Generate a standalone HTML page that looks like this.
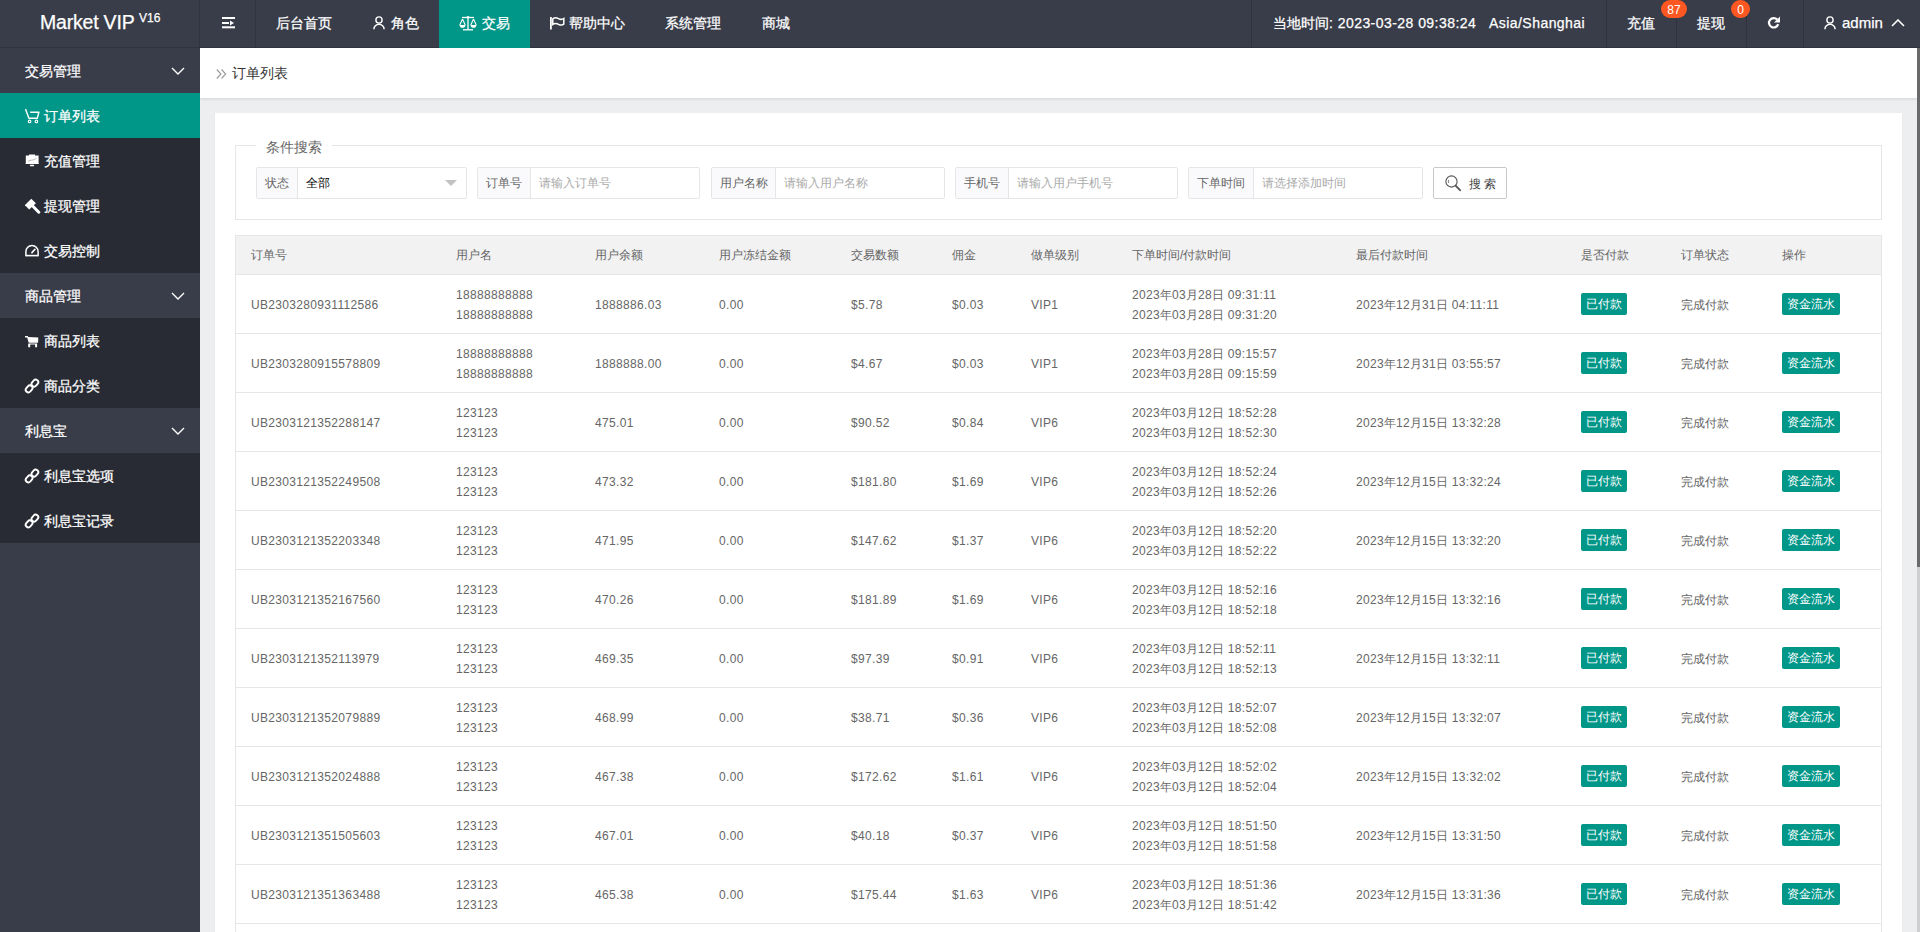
<!DOCTYPE html>
<html><head><meta charset="utf-8"><title>订单列表</title>
<style>
*{box-sizing:border-box}
html,body{margin:0;padding:0;width:1920px;height:932px;overflow:hidden;background:#F2F2F2}
body{font-family:"Liberation Sans",sans-serif;position:relative}
.ab{position:absolute;white-space:nowrap;line-height:1}
.ab>svg{display:block}
.hd{position:absolute;left:0;top:0;width:1920px;height:48px;background:#393D49;border-bottom:1px solid #30333d}
.vdiv{position:absolute;top:0;width:1px;height:47px;background:#30333d}
.nt{color:#fff;font-size:14px}
.hd2 .ab{-webkit-text-stroke:0.25px #fff}
.side{position:absolute;left:0;top:48px;width:200px;height:884px;background:#393D49}
.grp{position:absolute;left:0;width:200px;background:#282B33}
.si{color:#fff;font-size:14px}
.content{position:absolute;left:200px;top:48px;width:1717px;height:884px;background:#EDEEF0}
.bc{position:absolute;left:200px;top:48px;width:1717px;height:50px;background:#fff;box-shadow:0 1px 3px rgba(0,0,0,.12)}
.card{position:absolute;left:215px;top:113px;width:1687px;height:830px;background:#fff;box-shadow:0 1px 2px rgba(0,0,0,.05)}
.fs{position:absolute;left:235px;top:145px;width:1647px;height:75px;border:1px solid #e6e6e6}
.lg{position:absolute;left:256px;top:136px;width:76px;height:18px;background:#fff}
.ig{position:absolute;top:167px;height:32px;border:1px solid #e6e6e6;border-radius:2px;background:#fff}
.igl{position:absolute;left:0;top:0;height:30px;background:#FAFAFC;border-right:1px solid #e6e6e6}
.t12{font-size:12px}
.tbl{position:absolute;left:235px;top:235px;width:1647px;height:720px;border:1px solid #e6e6e6;border-bottom:none}
.thd{position:absolute;left:236px;top:236px;width:1645px;height:38px;background:#F2F2F3}
.rl{position:absolute;left:236px;width:1645px;height:1px;background:#e6e6e6}
.tc{color:#666;font-size:12px}
.btn{position:absolute;height:22px;line-height:22px;background:#009688;color:#fff;font-size:12px;border-radius:2px;padding:0 5px;white-space:nowrap}
.sb{position:absolute;left:1917px;top:48px;width:3px;height:884px;background:#cfcfcf}
.sbt{position:absolute;left:1917px;top:48px;width:3px;height:519px;background:#6a6a6a}
.badge{position:absolute;height:18px;min-width:18px;border-radius:9px;background:#FF5722;color:#fff;font-size:12px;line-height:20px;text-align:center;padding:0 4px}
</style></head><body>

<div class="content"></div>
<div class="bc"></div>
<div class="ab" style="left:216px;top:69px;"><svg width="11" height="10" viewBox="0 0 11 10"><path d="M0.8 0.5 L5 5 L0.8 9.5 M5.5 0.5 L9.7 5 L5.5 9.5" fill="none" stroke="#999" stroke-width="1.1"/></svg></div>
<div class="ab" style="left:232px;top:66px;font-size:14px;color:#333">订单列表</div>
<div class="card"></div>
<div class="fs"></div>
<div class="lg"></div>
<div class="ab" style="left:266px;top:140px;font-size:14px;color:#666">条件搜索</div>
<div class="ig" style="left:256px;width:211px"><div class="igl" style="width:41px"></div></div>
<div class="ab" style="left:265px;top:177px;font-size:12px;color:#666">状态</div>
<div class="ab" style="left:306px;top:177px;font-size:12px;color:#000">全部</div>
<div class="ig" style="left:477px;width:223px"><div class="igl" style="width:53px"></div></div>
<div class="ab" style="left:486px;top:177px;font-size:12px;color:#666">订单号</div>
<div class="ab" style="left:539px;top:177px;font-size:12px;color:#aaa">请输入订单号</div>
<div class="ig" style="left:711px;width:234px"><div class="igl" style="width:64px"></div></div>
<div class="ab" style="left:720px;top:177px;font-size:12px;color:#666">用户名称</div>
<div class="ab" style="left:784px;top:177px;font-size:12px;color:#aaa">请输入用户名称</div>
<div class="ig" style="left:955px;width:223px"><div class="igl" style="width:53px"></div></div>
<div class="ab" style="left:964px;top:177px;font-size:12px;color:#666">手机号</div>
<div class="ab" style="left:1017px;top:177px;font-size:12px;color:#aaa">请输入用户手机号</div>
<div class="ig" style="left:1188px;width:235px"><div class="igl" style="width:65px"></div></div>
<div class="ab" style="left:1197px;top:177px;font-size:12px;color:#666">下单时间</div>
<div class="ab" style="left:1262px;top:177px;font-size:12px;color:#aaa">请选择添加时间</div>
<div class="ab" style="left:445px;top:180px;"><svg width="12" height="6" viewBox="0 0 12 6"><path d="M0 0H12L6 6Z" fill="#c2c2c2"/></svg></div>
<div class="ig" style="left:1433px;width:74px;border-color:#C9C9C9"></div>
<div class="ab" style="left:1445px;top:175px;"><svg width="17" height="17" viewBox="0 0 17 17"><circle cx="6.5" cy="6.5" r="5.6" fill="none" stroke="#555" stroke-width="1.1"/><path d="M10.6 10.7 L15 15.2" stroke="#555" stroke-width="1.9" stroke-linecap="round"/><path d="M3.6 5 Q3.2 6.5 3.8 8" fill="none" stroke="#667" stroke-width="0.9"/></svg></div>
<div class="ab" style="left:1469px;top:178px;font-size:12px;color:#444;letter-spacing:0px">搜 索</div>
<div class="tbl"></div>
<div class="thd"></div>
<div class="rl" style="top:274px"></div>
<div class="ab" style="left:251px;top:249px;font-size:12px;color:#666">订单号</div>
<div class="ab" style="left:456px;top:249px;font-size:12px;color:#666">用户名</div>
<div class="ab" style="left:595px;top:249px;font-size:12px;color:#666">用户余额</div>
<div class="ab" style="left:719px;top:249px;font-size:12px;color:#666">用户冻结金额</div>
<div class="ab" style="left:851px;top:249px;font-size:12px;color:#666">交易数额</div>
<div class="ab" style="left:952px;top:249px;font-size:12px;color:#666">佣金</div>
<div class="ab" style="left:1031px;top:249px;font-size:12px;color:#666">做单级别</div>
<div class="ab" style="left:1132px;top:249px;font-size:12px;color:#666">下单时间/付款时间</div>
<div class="ab" style="left:1356px;top:249px;font-size:12px;color:#666">最后付款时间</div>
<div class="ab" style="left:1581px;top:249px;font-size:12px;color:#666">是否付款</div>
<div class="ab" style="left:1681px;top:249px;font-size:12px;color:#666">订单状态</div>
<div class="ab" style="left:1782px;top:249px;font-size:12px;color:#666">操作</div>
<div class="rl" style="top:333px"></div>
<div class="ab" style="left:251px;top:299px;font-size:12px;color:#666"><span style="letter-spacing:0.33px">UB2303280931112586</span></div>
<div class="ab" style="left:456px;top:289px;font-size:12px;color:#666"><span style="letter-spacing:0.33px">18888888888</span></div><div class="ab" style="left:456px;top:309px;font-size:12px;color:#666"><span style="letter-spacing:0.33px">18888888888</span></div>
<div class="ab" style="left:595px;top:299px;font-size:12px;color:#666"><span style="letter-spacing:0.33px">1888886.03</span></div>
<div class="ab" style="left:719px;top:299px;font-size:12px;color:#666"><span style="letter-spacing:0.33px">0.00</span></div>
<div class="ab" style="left:851px;top:299px;font-size:12px;color:#666"><span style="letter-spacing:0.33px">$5.78</span></div>
<div class="ab" style="left:952px;top:299px;font-size:12px;color:#666"><span style="letter-spacing:0.33px">$0.03</span></div>
<div class="ab" style="left:1031px;top:299px;font-size:12px;color:#666"><span style="letter-spacing:0.33px">VIP1</span></div>
<div class="ab" style="left:1132px;top:289px;font-size:12px;color:#666"><span style="letter-spacing:0.33px">2023</span>年<span style="letter-spacing:0.33px">03</span>月<span style="letter-spacing:0.33px">28</span>日<span style="letter-spacing:0.33px"> 09:31:11</span></div><div class="ab" style="left:1132px;top:309px;font-size:12px;color:#666"><span style="letter-spacing:0.33px">2023</span>年<span style="letter-spacing:0.33px">03</span>月<span style="letter-spacing:0.33px">28</span>日<span style="letter-spacing:0.33px"> 09:31:20</span></div>
<div class="ab" style="left:1356px;top:299px;font-size:12px;color:#666"><span style="letter-spacing:0.33px">2023</span>年<span style="letter-spacing:0.33px">12</span>月<span style="letter-spacing:0.33px">31</span>日<span style="letter-spacing:0.33px"> 04:11:11</span></div>
<div class="btn" style="left:1581px;top:293px">已付款</div>
<div class="ab" style="left:1681px;top:299px;font-size:12px;color:#666">完成付款</div>
<div class="btn" style="left:1782px;top:293px">资金流水</div>
<div class="rl" style="top:392px"></div>
<div class="ab" style="left:251px;top:358px;font-size:12px;color:#666"><span style="letter-spacing:0.33px">UB2303280915578809</span></div>
<div class="ab" style="left:456px;top:348px;font-size:12px;color:#666"><span style="letter-spacing:0.33px">18888888888</span></div><div class="ab" style="left:456px;top:368px;font-size:12px;color:#666"><span style="letter-spacing:0.33px">18888888888</span></div>
<div class="ab" style="left:595px;top:358px;font-size:12px;color:#666"><span style="letter-spacing:0.33px">1888888.00</span></div>
<div class="ab" style="left:719px;top:358px;font-size:12px;color:#666"><span style="letter-spacing:0.33px">0.00</span></div>
<div class="ab" style="left:851px;top:358px;font-size:12px;color:#666"><span style="letter-spacing:0.33px">$4.67</span></div>
<div class="ab" style="left:952px;top:358px;font-size:12px;color:#666"><span style="letter-spacing:0.33px">$0.03</span></div>
<div class="ab" style="left:1031px;top:358px;font-size:12px;color:#666"><span style="letter-spacing:0.33px">VIP1</span></div>
<div class="ab" style="left:1132px;top:348px;font-size:12px;color:#666"><span style="letter-spacing:0.33px">2023</span>年<span style="letter-spacing:0.33px">03</span>月<span style="letter-spacing:0.33px">28</span>日<span style="letter-spacing:0.33px"> 09:15:57</span></div><div class="ab" style="left:1132px;top:368px;font-size:12px;color:#666"><span style="letter-spacing:0.33px">2023</span>年<span style="letter-spacing:0.33px">03</span>月<span style="letter-spacing:0.33px">28</span>日<span style="letter-spacing:0.33px"> 09:15:59</span></div>
<div class="ab" style="left:1356px;top:358px;font-size:12px;color:#666"><span style="letter-spacing:0.33px">2023</span>年<span style="letter-spacing:0.33px">12</span>月<span style="letter-spacing:0.33px">31</span>日<span style="letter-spacing:0.33px"> 03:55:57</span></div>
<div class="btn" style="left:1581px;top:352px">已付款</div>
<div class="ab" style="left:1681px;top:358px;font-size:12px;color:#666">完成付款</div>
<div class="btn" style="left:1782px;top:352px">资金流水</div>
<div class="rl" style="top:451px"></div>
<div class="ab" style="left:251px;top:417px;font-size:12px;color:#666"><span style="letter-spacing:0.33px">UB2303121352288147</span></div>
<div class="ab" style="left:456px;top:407px;font-size:12px;color:#666"><span style="letter-spacing:0.33px">123123</span></div><div class="ab" style="left:456px;top:427px;font-size:12px;color:#666"><span style="letter-spacing:0.33px">123123</span></div>
<div class="ab" style="left:595px;top:417px;font-size:12px;color:#666"><span style="letter-spacing:0.33px">475.01</span></div>
<div class="ab" style="left:719px;top:417px;font-size:12px;color:#666"><span style="letter-spacing:0.33px">0.00</span></div>
<div class="ab" style="left:851px;top:417px;font-size:12px;color:#666"><span style="letter-spacing:0.33px">$90.52</span></div>
<div class="ab" style="left:952px;top:417px;font-size:12px;color:#666"><span style="letter-spacing:0.33px">$0.84</span></div>
<div class="ab" style="left:1031px;top:417px;font-size:12px;color:#666"><span style="letter-spacing:0.33px">VIP6</span></div>
<div class="ab" style="left:1132px;top:407px;font-size:12px;color:#666"><span style="letter-spacing:0.33px">2023</span>年<span style="letter-spacing:0.33px">03</span>月<span style="letter-spacing:0.33px">12</span>日<span style="letter-spacing:0.33px"> 18:52:28</span></div><div class="ab" style="left:1132px;top:427px;font-size:12px;color:#666"><span style="letter-spacing:0.33px">2023</span>年<span style="letter-spacing:0.33px">03</span>月<span style="letter-spacing:0.33px">12</span>日<span style="letter-spacing:0.33px"> 18:52:30</span></div>
<div class="ab" style="left:1356px;top:417px;font-size:12px;color:#666"><span style="letter-spacing:0.33px">2023</span>年<span style="letter-spacing:0.33px">12</span>月<span style="letter-spacing:0.33px">15</span>日<span style="letter-spacing:0.33px"> 13:32:28</span></div>
<div class="btn" style="left:1581px;top:411px">已付款</div>
<div class="ab" style="left:1681px;top:417px;font-size:12px;color:#666">完成付款</div>
<div class="btn" style="left:1782px;top:411px">资金流水</div>
<div class="rl" style="top:510px"></div>
<div class="ab" style="left:251px;top:476px;font-size:12px;color:#666"><span style="letter-spacing:0.33px">UB2303121352249508</span></div>
<div class="ab" style="left:456px;top:466px;font-size:12px;color:#666"><span style="letter-spacing:0.33px">123123</span></div><div class="ab" style="left:456px;top:486px;font-size:12px;color:#666"><span style="letter-spacing:0.33px">123123</span></div>
<div class="ab" style="left:595px;top:476px;font-size:12px;color:#666"><span style="letter-spacing:0.33px">473.32</span></div>
<div class="ab" style="left:719px;top:476px;font-size:12px;color:#666"><span style="letter-spacing:0.33px">0.00</span></div>
<div class="ab" style="left:851px;top:476px;font-size:12px;color:#666"><span style="letter-spacing:0.33px">$181.80</span></div>
<div class="ab" style="left:952px;top:476px;font-size:12px;color:#666"><span style="letter-spacing:0.33px">$1.69</span></div>
<div class="ab" style="left:1031px;top:476px;font-size:12px;color:#666"><span style="letter-spacing:0.33px">VIP6</span></div>
<div class="ab" style="left:1132px;top:466px;font-size:12px;color:#666"><span style="letter-spacing:0.33px">2023</span>年<span style="letter-spacing:0.33px">03</span>月<span style="letter-spacing:0.33px">12</span>日<span style="letter-spacing:0.33px"> 18:52:24</span></div><div class="ab" style="left:1132px;top:486px;font-size:12px;color:#666"><span style="letter-spacing:0.33px">2023</span>年<span style="letter-spacing:0.33px">03</span>月<span style="letter-spacing:0.33px">12</span>日<span style="letter-spacing:0.33px"> 18:52:26</span></div>
<div class="ab" style="left:1356px;top:476px;font-size:12px;color:#666"><span style="letter-spacing:0.33px">2023</span>年<span style="letter-spacing:0.33px">12</span>月<span style="letter-spacing:0.33px">15</span>日<span style="letter-spacing:0.33px"> 13:32:24</span></div>
<div class="btn" style="left:1581px;top:470px">已付款</div>
<div class="ab" style="left:1681px;top:476px;font-size:12px;color:#666">完成付款</div>
<div class="btn" style="left:1782px;top:470px">资金流水</div>
<div class="rl" style="top:569px"></div>
<div class="ab" style="left:251px;top:535px;font-size:12px;color:#666"><span style="letter-spacing:0.33px">UB2303121352203348</span></div>
<div class="ab" style="left:456px;top:525px;font-size:12px;color:#666"><span style="letter-spacing:0.33px">123123</span></div><div class="ab" style="left:456px;top:545px;font-size:12px;color:#666"><span style="letter-spacing:0.33px">123123</span></div>
<div class="ab" style="left:595px;top:535px;font-size:12px;color:#666"><span style="letter-spacing:0.33px">471.95</span></div>
<div class="ab" style="left:719px;top:535px;font-size:12px;color:#666"><span style="letter-spacing:0.33px">0.00</span></div>
<div class="ab" style="left:851px;top:535px;font-size:12px;color:#666"><span style="letter-spacing:0.33px">$147.62</span></div>
<div class="ab" style="left:952px;top:535px;font-size:12px;color:#666"><span style="letter-spacing:0.33px">$1.37</span></div>
<div class="ab" style="left:1031px;top:535px;font-size:12px;color:#666"><span style="letter-spacing:0.33px">VIP6</span></div>
<div class="ab" style="left:1132px;top:525px;font-size:12px;color:#666"><span style="letter-spacing:0.33px">2023</span>年<span style="letter-spacing:0.33px">03</span>月<span style="letter-spacing:0.33px">12</span>日<span style="letter-spacing:0.33px"> 18:52:20</span></div><div class="ab" style="left:1132px;top:545px;font-size:12px;color:#666"><span style="letter-spacing:0.33px">2023</span>年<span style="letter-spacing:0.33px">03</span>月<span style="letter-spacing:0.33px">12</span>日<span style="letter-spacing:0.33px"> 18:52:22</span></div>
<div class="ab" style="left:1356px;top:535px;font-size:12px;color:#666"><span style="letter-spacing:0.33px">2023</span>年<span style="letter-spacing:0.33px">12</span>月<span style="letter-spacing:0.33px">15</span>日<span style="letter-spacing:0.33px"> 13:32:20</span></div>
<div class="btn" style="left:1581px;top:529px">已付款</div>
<div class="ab" style="left:1681px;top:535px;font-size:12px;color:#666">完成付款</div>
<div class="btn" style="left:1782px;top:529px">资金流水</div>
<div class="rl" style="top:628px"></div>
<div class="ab" style="left:251px;top:594px;font-size:12px;color:#666"><span style="letter-spacing:0.33px">UB2303121352167560</span></div>
<div class="ab" style="left:456px;top:584px;font-size:12px;color:#666"><span style="letter-spacing:0.33px">123123</span></div><div class="ab" style="left:456px;top:604px;font-size:12px;color:#666"><span style="letter-spacing:0.33px">123123</span></div>
<div class="ab" style="left:595px;top:594px;font-size:12px;color:#666"><span style="letter-spacing:0.33px">470.26</span></div>
<div class="ab" style="left:719px;top:594px;font-size:12px;color:#666"><span style="letter-spacing:0.33px">0.00</span></div>
<div class="ab" style="left:851px;top:594px;font-size:12px;color:#666"><span style="letter-spacing:0.33px">$181.89</span></div>
<div class="ab" style="left:952px;top:594px;font-size:12px;color:#666"><span style="letter-spacing:0.33px">$1.69</span></div>
<div class="ab" style="left:1031px;top:594px;font-size:12px;color:#666"><span style="letter-spacing:0.33px">VIP6</span></div>
<div class="ab" style="left:1132px;top:584px;font-size:12px;color:#666"><span style="letter-spacing:0.33px">2023</span>年<span style="letter-spacing:0.33px">03</span>月<span style="letter-spacing:0.33px">12</span>日<span style="letter-spacing:0.33px"> 18:52:16</span></div><div class="ab" style="left:1132px;top:604px;font-size:12px;color:#666"><span style="letter-spacing:0.33px">2023</span>年<span style="letter-spacing:0.33px">03</span>月<span style="letter-spacing:0.33px">12</span>日<span style="letter-spacing:0.33px"> 18:52:18</span></div>
<div class="ab" style="left:1356px;top:594px;font-size:12px;color:#666"><span style="letter-spacing:0.33px">2023</span>年<span style="letter-spacing:0.33px">12</span>月<span style="letter-spacing:0.33px">15</span>日<span style="letter-spacing:0.33px"> 13:32:16</span></div>
<div class="btn" style="left:1581px;top:588px">已付款</div>
<div class="ab" style="left:1681px;top:594px;font-size:12px;color:#666">完成付款</div>
<div class="btn" style="left:1782px;top:588px">资金流水</div>
<div class="rl" style="top:687px"></div>
<div class="ab" style="left:251px;top:653px;font-size:12px;color:#666"><span style="letter-spacing:0.33px">UB2303121352113979</span></div>
<div class="ab" style="left:456px;top:643px;font-size:12px;color:#666"><span style="letter-spacing:0.33px">123123</span></div><div class="ab" style="left:456px;top:663px;font-size:12px;color:#666"><span style="letter-spacing:0.33px">123123</span></div>
<div class="ab" style="left:595px;top:653px;font-size:12px;color:#666"><span style="letter-spacing:0.33px">469.35</span></div>
<div class="ab" style="left:719px;top:653px;font-size:12px;color:#666"><span style="letter-spacing:0.33px">0.00</span></div>
<div class="ab" style="left:851px;top:653px;font-size:12px;color:#666"><span style="letter-spacing:0.33px">$97.39</span></div>
<div class="ab" style="left:952px;top:653px;font-size:12px;color:#666"><span style="letter-spacing:0.33px">$0.91</span></div>
<div class="ab" style="left:1031px;top:653px;font-size:12px;color:#666"><span style="letter-spacing:0.33px">VIP6</span></div>
<div class="ab" style="left:1132px;top:643px;font-size:12px;color:#666"><span style="letter-spacing:0.33px">2023</span>年<span style="letter-spacing:0.33px">03</span>月<span style="letter-spacing:0.33px">12</span>日<span style="letter-spacing:0.33px"> 18:52:11</span></div><div class="ab" style="left:1132px;top:663px;font-size:12px;color:#666"><span style="letter-spacing:0.33px">2023</span>年<span style="letter-spacing:0.33px">03</span>月<span style="letter-spacing:0.33px">12</span>日<span style="letter-spacing:0.33px"> 18:52:13</span></div>
<div class="ab" style="left:1356px;top:653px;font-size:12px;color:#666"><span style="letter-spacing:0.33px">2023</span>年<span style="letter-spacing:0.33px">12</span>月<span style="letter-spacing:0.33px">15</span>日<span style="letter-spacing:0.33px"> 13:32:11</span></div>
<div class="btn" style="left:1581px;top:647px">已付款</div>
<div class="ab" style="left:1681px;top:653px;font-size:12px;color:#666">完成付款</div>
<div class="btn" style="left:1782px;top:647px">资金流水</div>
<div class="rl" style="top:746px"></div>
<div class="ab" style="left:251px;top:712px;font-size:12px;color:#666"><span style="letter-spacing:0.33px">UB2303121352079889</span></div>
<div class="ab" style="left:456px;top:702px;font-size:12px;color:#666"><span style="letter-spacing:0.33px">123123</span></div><div class="ab" style="left:456px;top:722px;font-size:12px;color:#666"><span style="letter-spacing:0.33px">123123</span></div>
<div class="ab" style="left:595px;top:712px;font-size:12px;color:#666"><span style="letter-spacing:0.33px">468.99</span></div>
<div class="ab" style="left:719px;top:712px;font-size:12px;color:#666"><span style="letter-spacing:0.33px">0.00</span></div>
<div class="ab" style="left:851px;top:712px;font-size:12px;color:#666"><span style="letter-spacing:0.33px">$38.71</span></div>
<div class="ab" style="left:952px;top:712px;font-size:12px;color:#666"><span style="letter-spacing:0.33px">$0.36</span></div>
<div class="ab" style="left:1031px;top:712px;font-size:12px;color:#666"><span style="letter-spacing:0.33px">VIP6</span></div>
<div class="ab" style="left:1132px;top:702px;font-size:12px;color:#666"><span style="letter-spacing:0.33px">2023</span>年<span style="letter-spacing:0.33px">03</span>月<span style="letter-spacing:0.33px">12</span>日<span style="letter-spacing:0.33px"> 18:52:07</span></div><div class="ab" style="left:1132px;top:722px;font-size:12px;color:#666"><span style="letter-spacing:0.33px">2023</span>年<span style="letter-spacing:0.33px">03</span>月<span style="letter-spacing:0.33px">12</span>日<span style="letter-spacing:0.33px"> 18:52:08</span></div>
<div class="ab" style="left:1356px;top:712px;font-size:12px;color:#666"><span style="letter-spacing:0.33px">2023</span>年<span style="letter-spacing:0.33px">12</span>月<span style="letter-spacing:0.33px">15</span>日<span style="letter-spacing:0.33px"> 13:32:07</span></div>
<div class="btn" style="left:1581px;top:706px">已付款</div>
<div class="ab" style="left:1681px;top:712px;font-size:12px;color:#666">完成付款</div>
<div class="btn" style="left:1782px;top:706px">资金流水</div>
<div class="rl" style="top:805px"></div>
<div class="ab" style="left:251px;top:771px;font-size:12px;color:#666"><span style="letter-spacing:0.33px">UB2303121352024888</span></div>
<div class="ab" style="left:456px;top:761px;font-size:12px;color:#666"><span style="letter-spacing:0.33px">123123</span></div><div class="ab" style="left:456px;top:781px;font-size:12px;color:#666"><span style="letter-spacing:0.33px">123123</span></div>
<div class="ab" style="left:595px;top:771px;font-size:12px;color:#666"><span style="letter-spacing:0.33px">467.38</span></div>
<div class="ab" style="left:719px;top:771px;font-size:12px;color:#666"><span style="letter-spacing:0.33px">0.00</span></div>
<div class="ab" style="left:851px;top:771px;font-size:12px;color:#666"><span style="letter-spacing:0.33px">$172.62</span></div>
<div class="ab" style="left:952px;top:771px;font-size:12px;color:#666"><span style="letter-spacing:0.33px">$1.61</span></div>
<div class="ab" style="left:1031px;top:771px;font-size:12px;color:#666"><span style="letter-spacing:0.33px">VIP6</span></div>
<div class="ab" style="left:1132px;top:761px;font-size:12px;color:#666"><span style="letter-spacing:0.33px">2023</span>年<span style="letter-spacing:0.33px">03</span>月<span style="letter-spacing:0.33px">12</span>日<span style="letter-spacing:0.33px"> 18:52:02</span></div><div class="ab" style="left:1132px;top:781px;font-size:12px;color:#666"><span style="letter-spacing:0.33px">2023</span>年<span style="letter-spacing:0.33px">03</span>月<span style="letter-spacing:0.33px">12</span>日<span style="letter-spacing:0.33px"> 18:52:04</span></div>
<div class="ab" style="left:1356px;top:771px;font-size:12px;color:#666"><span style="letter-spacing:0.33px">2023</span>年<span style="letter-spacing:0.33px">12</span>月<span style="letter-spacing:0.33px">15</span>日<span style="letter-spacing:0.33px"> 13:32:02</span></div>
<div class="btn" style="left:1581px;top:765px">已付款</div>
<div class="ab" style="left:1681px;top:771px;font-size:12px;color:#666">完成付款</div>
<div class="btn" style="left:1782px;top:765px">资金流水</div>
<div class="rl" style="top:864px"></div>
<div class="ab" style="left:251px;top:830px;font-size:12px;color:#666"><span style="letter-spacing:0.33px">UB2303121351505603</span></div>
<div class="ab" style="left:456px;top:820px;font-size:12px;color:#666"><span style="letter-spacing:0.33px">123123</span></div><div class="ab" style="left:456px;top:840px;font-size:12px;color:#666"><span style="letter-spacing:0.33px">123123</span></div>
<div class="ab" style="left:595px;top:830px;font-size:12px;color:#666"><span style="letter-spacing:0.33px">467.01</span></div>
<div class="ab" style="left:719px;top:830px;font-size:12px;color:#666"><span style="letter-spacing:0.33px">0.00</span></div>
<div class="ab" style="left:851px;top:830px;font-size:12px;color:#666"><span style="letter-spacing:0.33px">$40.18</span></div>
<div class="ab" style="left:952px;top:830px;font-size:12px;color:#666"><span style="letter-spacing:0.33px">$0.37</span></div>
<div class="ab" style="left:1031px;top:830px;font-size:12px;color:#666"><span style="letter-spacing:0.33px">VIP6</span></div>
<div class="ab" style="left:1132px;top:820px;font-size:12px;color:#666"><span style="letter-spacing:0.33px">2023</span>年<span style="letter-spacing:0.33px">03</span>月<span style="letter-spacing:0.33px">12</span>日<span style="letter-spacing:0.33px"> 18:51:50</span></div><div class="ab" style="left:1132px;top:840px;font-size:12px;color:#666"><span style="letter-spacing:0.33px">2023</span>年<span style="letter-spacing:0.33px">03</span>月<span style="letter-spacing:0.33px">12</span>日<span style="letter-spacing:0.33px"> 18:51:58</span></div>
<div class="ab" style="left:1356px;top:830px;font-size:12px;color:#666"><span style="letter-spacing:0.33px">2023</span>年<span style="letter-spacing:0.33px">12</span>月<span style="letter-spacing:0.33px">15</span>日<span style="letter-spacing:0.33px"> 13:31:50</span></div>
<div class="btn" style="left:1581px;top:824px">已付款</div>
<div class="ab" style="left:1681px;top:830px;font-size:12px;color:#666">完成付款</div>
<div class="btn" style="left:1782px;top:824px">资金流水</div>
<div class="rl" style="top:923px"></div>
<div class="ab" style="left:251px;top:889px;font-size:12px;color:#666"><span style="letter-spacing:0.33px">UB2303121351363488</span></div>
<div class="ab" style="left:456px;top:879px;font-size:12px;color:#666"><span style="letter-spacing:0.33px">123123</span></div><div class="ab" style="left:456px;top:899px;font-size:12px;color:#666"><span style="letter-spacing:0.33px">123123</span></div>
<div class="ab" style="left:595px;top:889px;font-size:12px;color:#666"><span style="letter-spacing:0.33px">465.38</span></div>
<div class="ab" style="left:719px;top:889px;font-size:12px;color:#666"><span style="letter-spacing:0.33px">0.00</span></div>
<div class="ab" style="left:851px;top:889px;font-size:12px;color:#666"><span style="letter-spacing:0.33px">$175.44</span></div>
<div class="ab" style="left:952px;top:889px;font-size:12px;color:#666"><span style="letter-spacing:0.33px">$1.63</span></div>
<div class="ab" style="left:1031px;top:889px;font-size:12px;color:#666"><span style="letter-spacing:0.33px">VIP6</span></div>
<div class="ab" style="left:1132px;top:879px;font-size:12px;color:#666"><span style="letter-spacing:0.33px">2023</span>年<span style="letter-spacing:0.33px">03</span>月<span style="letter-spacing:0.33px">12</span>日<span style="letter-spacing:0.33px"> 18:51:36</span></div><div class="ab" style="left:1132px;top:899px;font-size:12px;color:#666"><span style="letter-spacing:0.33px">2023</span>年<span style="letter-spacing:0.33px">03</span>月<span style="letter-spacing:0.33px">12</span>日<span style="letter-spacing:0.33px"> 18:51:42</span></div>
<div class="ab" style="left:1356px;top:889px;font-size:12px;color:#666"><span style="letter-spacing:0.33px">2023</span>年<span style="letter-spacing:0.33px">12</span>月<span style="letter-spacing:0.33px">15</span>日<span style="letter-spacing:0.33px"> 13:31:36</span></div>
<div class="btn" style="left:1581px;top:883px">已付款</div>
<div class="ab" style="left:1681px;top:889px;font-size:12px;color:#666">完成付款</div>
<div class="btn" style="left:1782px;top:883px">资金流水</div>
<div class="rl" style="top:982px"></div>
<div class="ab" style="left:251px;top:948px;font-size:12px;color:#666"><span style="letter-spacing:0.33px">UB2303121351300000</span></div>
<div class="ab" style="left:456px;top:938px;font-size:12px;color:#666"><span style="letter-spacing:0.33px">123123</span></div><div class="ab" style="left:456px;top:958px;font-size:12px;color:#666"><span style="letter-spacing:0.33px">123123</span></div>
<div class="ab" style="left:595px;top:948px;font-size:12px;color:#666"><span style="letter-spacing:0.33px">463.00</span></div>
<div class="ab" style="left:719px;top:948px;font-size:12px;color:#666"><span style="letter-spacing:0.33px">0.00</span></div>
<div class="ab" style="left:851px;top:948px;font-size:12px;color:#666"><span style="letter-spacing:0.33px">$100.00</span></div>
<div class="ab" style="left:952px;top:948px;font-size:12px;color:#666"><span style="letter-spacing:0.33px">$1.00</span></div>
<div class="ab" style="left:1031px;top:948px;font-size:12px;color:#666"><span style="letter-spacing:0.33px">VIP6</span></div>
<div class="ab" style="left:1132px;top:938px;font-size:12px;color:#666"><span style="letter-spacing:0.33px">2023</span>年<span style="letter-spacing:0.33px">03</span>月<span style="letter-spacing:0.33px">12</span>日<span style="letter-spacing:0.33px"> 18:51:30</span></div><div class="ab" style="left:1132px;top:958px;font-size:12px;color:#666"><span style="letter-spacing:0.33px">2023</span>年<span style="letter-spacing:0.33px">03</span>月<span style="letter-spacing:0.33px">12</span>日<span style="letter-spacing:0.33px"> 18:51:32</span></div>
<div class="ab" style="left:1356px;top:948px;font-size:12px;color:#666"><span style="letter-spacing:0.33px">2023</span>年<span style="letter-spacing:0.33px">12</span>月<span style="letter-spacing:0.33px">15</span>日<span style="letter-spacing:0.33px"> 13:31:30</span></div>
<div class="btn" style="left:1581px;top:942px">已付款</div>
<div class="ab" style="left:1681px;top:948px;font-size:12px;color:#666">完成付款</div>
<div class="btn" style="left:1782px;top:942px">资金流水</div>
<div class="sb"></div><div class="sbt"></div>
<div class="side"></div>
<div class="hd2">
<div class="grp" style="top:138px;height:135px"></div>
<div class="grp" style="top:318px;height:90px"></div>
<div class="grp" style="top:453px;height:90px"></div>
<div class="ab" style="left:0;top:93px;width:200px;height:45px;background:#009688"></div>
<div class="ab" style="left:25px;top:64px;font-size:14px;color:#fff">交易管理</div>
<div class="ab" style="left:171px;top:67px;"><svg width="14" height="8" viewBox="0 0 14 8"><path d="M1 1 L7 7 L13 1" fill="none" stroke="#fff" stroke-width="1.35"/></svg></div>
<div class="ab" style="left:25px;top:289px;font-size:14px;color:#fff">商品管理</div>
<div class="ab" style="left:171px;top:292px;"><svg width="14" height="8" viewBox="0 0 14 8"><path d="M1 1 L7 7 L13 1" fill="none" stroke="#fff" stroke-width="1.35"/></svg></div>
<div class="ab" style="left:25px;top:424px;font-size:14px;color:#fff">利息宝</div>
<div class="ab" style="left:171px;top:427px;"><svg width="14" height="8" viewBox="0 0 14 8"><path d="M1 1 L7 7 L13 1" fill="none" stroke="#fff" stroke-width="1.35"/></svg></div>
<div class="ab" style="left:25px;top:108px;"><svg width="16" height="16" viewBox="0 0 16 16"><path d="M0.5 1.1 L3.9 10.3 H12.3 L13.9 4.3 H5.2" fill="none" stroke="#fff" stroke-width="1.4" stroke-linejoin="round"/><circle cx="4.6" cy="13.4" r="1.3" fill="none" stroke="#fff" stroke-width="1.1"/><circle cx="11.4" cy="13.4" r="1.3" fill="none" stroke="#fff" stroke-width="1.1"/></svg></div>
<div class="ab" style="left:44px;top:109px;font-size:14px;color:#fff">订单列表</div>
<div class="ab" style="left:25px;top:154px;"><svg width="15" height="13" viewBox="0 0 15 13"><path d="M4 0.6 H10 V1.6 H13.6 V9.4 L14.2 10.1 H0.2 L0.8 9.4 V1.6 H4Z" fill="#fff"/><path d="M3 7.2 L6 6.2 L8.5 5.8 L11.5 4.3" fill="none" stroke="#777" stroke-width="0.5"/><rect x="4.8" y="10.8" width="4.4" height="1.4" rx="0.7" fill="#fff"/></svg></div>
<div class="ab" style="left:44px;top:154px;font-size:14px;color:#fff">充值管理</div>
<div class="ab" style="left:25px;top:198px;"><svg width="16" height="16" viewBox="0 0 16 16"><path d="M6.3 0.8 L10.9 5.2 L4.2 11.5 L-0.2 7.1Z" fill="#fff"/><path d="M7.9 8.2 L13.8 14.2" stroke="#fff" stroke-width="3" stroke-linecap="round"/></svg></div>
<div class="ab" style="left:44px;top:199px;font-size:14px;color:#fff">提现管理</div>
<div class="ab" style="left:25px;top:244px;"><svg width="15" height="14" viewBox="0 0 15 14"><path d="M0.9 12.2 V7.6 A6.1 6.1 0 0 1 13.1 7.6 V12.2" fill="none" stroke="#fff" stroke-width="1.5"/><path d="M0.9 11.6 H13.1" stroke="#fff" stroke-width="1.6"/><path d="M6.9 8.6 L10 5.3" stroke="#fff" stroke-width="1.6" stroke-linecap="round"/></svg></div>
<div class="ab" style="left:44px;top:244px;font-size:14px;color:#fff">交易控制</div>
<div class="ab" style="left:25px;top:336px;"><svg width="14" height="12" viewBox="0 0 14 12"><path d="M0 0 H2.6 L3.4 1.1 L13.3 1.4 L13.1 6.7 H4.6 L3.6 6.6 L2.2 1.4 H0Z" fill="#fff"/><path d="M3.2 7.4 H12.1 V11.3 H10.1 V8.6 H5.2 V11.3 H3.2Z" fill="#fff"/></svg></div>
<div class="ab" style="left:44px;top:334px;font-size:14px;color:#fff">商品列表</div>
<div class="ab" style="left:24px;top:378px;"><svg width="16" height="16" viewBox="0 0 16 16"><g fill="none" stroke="#fff" stroke-width="1.9"><rect x="-3.8" y="-2.6" width="7.6" height="5.2" rx="2.6" transform="translate(10.9 5.1) rotate(-50)"/><rect x="-3.8" y="-2.6" width="7.6" height="5.2" rx="2.6" transform="translate(5.1 10.9) rotate(-50)"/></g></svg></div>
<div class="ab" style="left:44px;top:379px;font-size:14px;color:#fff">商品分类</div>
<div class="ab" style="left:24px;top:468px;"><svg width="16" height="16" viewBox="0 0 16 16"><g fill="none" stroke="#fff" stroke-width="1.9"><rect x="-3.8" y="-2.6" width="7.6" height="5.2" rx="2.6" transform="translate(10.9 5.1) rotate(-50)"/><rect x="-3.8" y="-2.6" width="7.6" height="5.2" rx="2.6" transform="translate(5.1 10.9) rotate(-50)"/></g></svg></div>
<div class="ab" style="left:44px;top:469px;font-size:14px;color:#fff">利息宝选项</div>
<div class="ab" style="left:24px;top:513px;"><svg width="16" height="16" viewBox="0 0 16 16"><g fill="none" stroke="#fff" stroke-width="1.9"><rect x="-3.8" y="-2.6" width="7.6" height="5.2" rx="2.6" transform="translate(10.9 5.1) rotate(-50)"/><rect x="-3.8" y="-2.6" width="7.6" height="5.2" rx="2.6" transform="translate(5.1 10.9) rotate(-50)"/></g></svg></div>
<div class="ab" style="left:44px;top:514px;font-size:14px;color:#fff">利息宝记录</div>
<div class="hd"></div>
<div class="vdiv" style="left:199px"></div>
<div class="vdiv" style="left:255px"></div>
<div class="vdiv" style="left:1251px"></div>
<div class="vdiv" style="left:1606px"></div>
<div class="vdiv" style="left:1676px"></div>
<div class="vdiv" style="left:1746px"></div>
<div class="vdiv" style="left:1803px"></div>
<div class="ab" style="left:40px;top:13px;font-size:19.5px;color:#fff;letter-spacing:-0.2px">Market VIP</div>
<div class="ab" style="left:139px;top:12px;font-size:12px;color:#fff">V16</div>
<div class="ab" style="left:222px;top:17px;"><svg width="14" height="12" viewBox="0 0 14 12"><rect x="0" y="0" width="13" height="2" fill="#fff"/><rect x="0" y="5" width="7" height="2" fill="#fff"/><path d="M8 3.5 L12 6 L8 8.5Z" fill="#fff"/><rect x="0" y="9.3" width="13" height="2" fill="#fff"/></svg></div>
<div class="ab" style="left:439px;top:0;width:91px;height:48px;background:#009688"></div>
<div class="ab" style="left:276px;top:16px;font-size:14px;color:#fff">后台首页</div>
<div class="ab" style="left:373px;top:16px;"><svg width="12" height="14" viewBox="0 0 12 14"><circle cx="6" cy="4" r="3.1" fill="none" stroke="#fff" stroke-width="1.4"/><path d="M0.9 13.2 A5.1 5 0 0 1 11.1 13.2" fill="none" stroke="#fff" stroke-width="1.5"/></svg></div>
<div class="ab" style="left:391px;top:16px;font-size:14px;color:#fff">角色</div>
<div class="ab" style="left:459px;top:16px;"><svg width="18" height="15" viewBox="0 0 18 15"><path d="M3 1.5 H15" stroke="#fff" stroke-width="1.3"/><circle cx="9" cy="1.3" r="1.1" fill="none" stroke="#fff" stroke-width="1"/><path d="M9 2.5 V13.5" stroke="#fff" stroke-width="1.3"/><path d="M4 13.8 H14" stroke="#fff" stroke-width="1.3"/><path d="M3.5 3 L0.8 9 M3.5 3 L6.2 9" stroke="#fff" stroke-width="1.1" fill="none"/><path d="M0.5 9 H6.5 C6.3 11 5 11.8 3.5 11.8 C2 11.8 0.7 11 0.5 9Z" fill="#fff"/><path d="M14.5 3 L11.8 9 M14.5 3 L17.2 9" stroke="#fff" stroke-width="1.1" fill="none"/><path d="M11.5 9 H17.5 C17.3 11 16 11.8 14.5 11.8 C13 11.8 11.7 11 11.5 9Z" fill="#fff"/></svg></div>
<div class="ab" style="left:482px;top:16px;font-size:14px;color:#fff">交易</div>
<div class="ab" style="left:550px;top:17px;"><svg width="15" height="13" viewBox="0 0 15 13"><rect x="0" y="0" width="1.8" height="12.5" fill="#fff"/><path d="M2.8 1.8 C5 0.2 7 0.8 8.5 1.6 C10 2.4 12 2.8 13.8 1.5 V7.2 C12 8.5 10 8.1 8.5 7.3 C7 6.5 5 6 2.8 7.5Z" fill="none" stroke="#fff" stroke-width="1.5"/></svg></div>
<div class="ab" style="left:569px;top:16px;font-size:14px;color:#fff">帮助中心</div>
<div class="ab" style="left:665px;top:16px;font-size:14px;color:#fff">系统管理</div>
<div class="ab" style="left:762px;top:16px;font-size:14px;color:#fff">商城</div>
<div class="ab" style="left:1273px;top:16px;font-size:14px;color:#fff">当地时间<span style="letter-spacing:0.45px">: 2023-03-28 09:38:24</span></div>
<div class="ab" style="left:1489px;top:16px;font-size:14px;color:#fff"><span style="letter-spacing:0.45px">Asia/Shanghai</span></div>
<div class="ab" style="left:1627px;top:16px;font-size:14px;color:#fff">充值</div>
<div class="badge" style="left:1661px;top:0px;width:26px">87</div>
<div class="ab" style="left:1697px;top:16px;font-size:14px;color:#fff">提现</div>
<div class="badge" style="left:1731px;top:0px;width:19px;padding:0">0</div>
<div class="ab" style="left:1767px;top:16px;"><svg width="14" height="14" viewBox="0 0 14 14"><path d="M11.2 8.2 A4.7 4.7 0 1 1 10.2 3.6" fill="none" stroke="#fff" stroke-width="2.2"/><path d="M13 0.5 V6.5 H7Z" fill="#fff"/></svg></div>
<div class="ab" style="left:1824px;top:16px;"><svg width="12" height="14" viewBox="0 0 12 14"><circle cx="6" cy="4" r="3.1" fill="none" stroke="#fff" stroke-width="1.4"/><path d="M0.9 13.2 A5.1 5 0 0 1 11.1 13.2" fill="none" stroke="#fff" stroke-width="1.5"/></svg></div>
<div class="ab" style="left:1842px;top:15px;font-size:15px;color:#fff">admin</div>
<div class="ab" style="left:1891px;top:19px;"><svg width="14" height="8" viewBox="0 0 14 8"><path d="M1 7 L7 1 L13 7" fill="none" stroke="#fff" stroke-width="1.6"/></svg></div>
</div>
</body></html>
